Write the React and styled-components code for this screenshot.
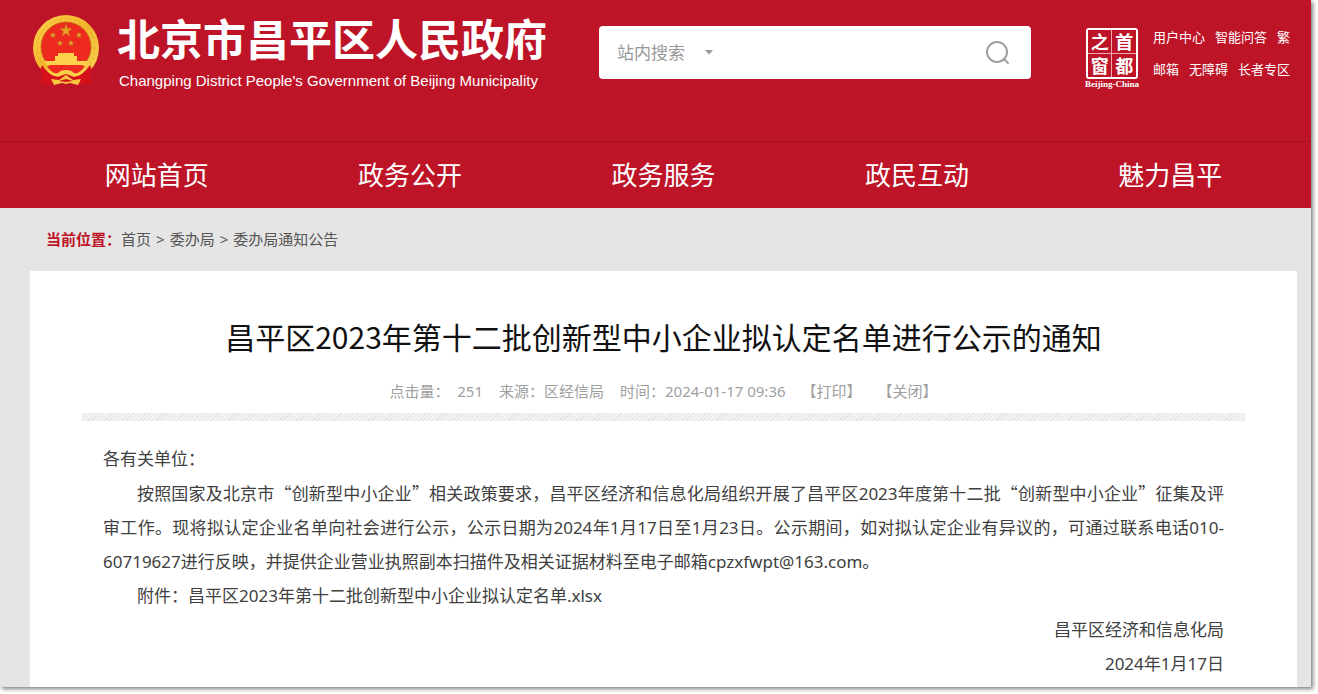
import { useState } from "react";
import styled, { createGlobalStyle } from "styled-components";

const GlobalStyle = createGlobalStyle`
  * {
    box-sizing: border-box;
  }

  body {
    margin: 0;
    background: #fff;
    color: #404040;
    font-family: "Noto Sans", "Noto Sans CJK SC", sans-serif;
  }

  a {
    color: inherit;
    text-decoration: none;
  }
`;

const Page = styled.div`
  display: flex;
  min-height: 100vh;
  padding: 0 7px 7px 0;
  overflow: hidden;
`;

const Site = styled.div`
  display: flex;
  flex-direction: column;
  flex: 1;
  min-width: 0;
  background: #e5e5e5;
  box-shadow: 2px 2px 4px rgba(0, 0, 0, 0.5);
`;

const Header = styled.header`
  display: flex;
  align-items: flex-start;
  height: 142px;
  padding: 12px 21px 0 30px;
  border-bottom: 1px solid #a51022;
  background: #be1428;
  color: #fff;
`;

const Brand = styled.a`
  display: flex;
  flex-shrink: 0;
  gap: 16px;
`;

const SiteName = styled.h1`
  margin: 0;
  font-family: "Noto Sans CJK SC", sans-serif;
  font-size: 43px;
  font-weight: 700;
  line-height: 50px;
`;

const SiteNameEn = styled.p`
  margin: 9px 0 0 2px;
  font-family: "Liberation Sans", Arial, sans-serif;
  font-size: 15px;
  line-height: 20px;
`;

const SearchForm = styled.form`
  display: flex;
  align-items: center;
  flex: 1;
  max-width: 432px;
  height: 53px;
  margin: 14px 50px 0 52px;
  padding: 0 20px 0 18px;
  border-radius: 4px;
  background: #fff;
  color: #999;
`;

const SearchScope = styled.label`
  display: flex;
  align-items: center;
  gap: 18px;
`;

const ScopeSelect = styled.select`
  width: 70px;
  padding: 0;
  border: none;
  outline: none;
  appearance: none;
  background: transparent;
  color: #999;
  font-family: inherit;
  font-size: 17px;
  line-height: 26px;
`;

const SearchInput = styled.input`
  flex: 1;
  min-width: 0;
  height: 40px;
  margin-left: 16px;
  border: none;
  outline: none;
  background: transparent;
  font-family: inherit;
  font-size: 17px;
`;

const SearchButton = styled.button`
  display: flex;
  padding: 0;
  border: none;
  background: transparent;
  color: #a0a0a0;
  cursor: pointer;
`;

const HeaderSide = styled.div`
  display: flex;
  gap: 14px;
  margin-left: auto;
`;

const Seal = styled.a`
  display: flex;
  flex-direction: column;
  align-items: center;
  padding-top: 16px;
`;

const SealFrame = styled.span`
  display: grid;
  grid-template-columns: 1fr 1fr;
  gap: 1px;
  width: 52px;
  height: 51px;
  border: 2px solid #fff;
  border-radius: 3px;
  background: #f0a8b0;
`;

const SealCell = styled.span`
  display: flex;
  align-items: center;
  justify-content: center;
  background: #be1428;
  font-family: "Noto Sans CJK SC", sans-serif;
  font-size: 18px;
  font-weight: 700;
  line-height: 23px;
`;

const SealCaption = styled.span`
  font-family: "Liberation Serif", serif;
  font-size: 9px;
  font-weight: 700;
  line-height: 10px;
`;

const QuickLinks = styled.nav`
  display: flex;
  flex-direction: column;
  gap: 12px;
  padding-top: 15px;
  font-size: 13px;
  line-height: 20px;
`;

const QuickRow = styled.div`
  display: flex;
  justify-content: space-between;
  gap: 10px;
  white-space: nowrap;
`;

const MainNav = styled.nav`
  display: grid;
  grid-template-columns: repeat(5, 1fr);
  padding: 0 14px 0 30px;
  background: #be1428;
`;

const NavLink = styled.a`
  color: #fff;
  font-size: 26px;
  line-height: 66px;
  text-align: center;
`;

const Breadcrumb = styled.nav`
  display: flex;
  padding: 19px 46px 20px;
  color: #555;
  font-size: 15px;
  line-height: 24px;
`;

const BreadcrumbLabel = styled.strong`
  color: #be1428;
`;

const Crumbs = styled.div`
  display: flex;
  gap: 5px;
`;

const Article = styled.article`
  flex: 1;
  margin: 0 14px 0 30px;
  padding: 41px 52px 0;
  background: #fff;
`;

const Title = styled.h2`
  margin: 0;
  color: #111;
  font-family: "Noto Sans CJK SC", sans-serif;
  font-size: 30px;
  font-weight: 400;
  line-height: 48px;
  text-align: center;
`;

const Meta = styled.div`
  display: flex;
  justify-content: center;
  gap: 16px;
  margin-top: 19px;
  color: #a0a0a0;
  font-size: 15px;
  line-height: 24px;
  white-space: pre;
`;

const MetaButton = styled.button`
  padding: 0;
  border: none;
  background: transparent;
  color: inherit;
  font: inherit;
  cursor: pointer;
`;

const Divider = styled.hr`
  height: 8px;
  margin: 10px 0 21px;
  border: none;
  background: repeating-linear-gradient(
    135deg,
    #e4e4e4 0 1px,
    #f4f4f4 1px 3px
  );
`;

const Content = styled.div`
  padding: 0 21px;
  font-size: 17px;
  line-height: 34px;
`;

const Paragraph = styled.p`
  margin: 0;
  text-align: justify;
  text-indent: ${({ $indent }) => ($indent ? "34px" : "0")};
`;

const Quote = styled.span`
  font-family: "Noto Sans CJK SC", sans-serif;
`;

const Signature = styled.p`
  margin: 0;
  text-align: right;
`;

const Emblem = () => (
  <svg width="71" height="76" viewBox="0 0 71 76" aria-hidden="true">
    <defs>
      <linearGradient id="gold" x1="0" y1="0" x2="1" y2="1">
        <stop offset="0" stopColor="#fbd34a" />
        <stop offset="0.5" stopColor="#f3b52c" />
        <stop offset="1" stopColor="#fbd95a" />
      </linearGradient>
    </defs>
    <circle cx="36" cy="36" r="33" fill="url(#gold)" />
    <circle
      cx="36"
      cy="36"
      r="29"
      fill="none"
      stroke="#e2a526"
      strokeWidth="1"
      strokeDasharray="2 3"
    />
    <circle cx="36" cy="35" r="25" fill="#ee2a1f" stroke="#c66a18" />
    <g fill="#e9a526" stroke="#b96b19" strokeWidth="0.4">
      <path d="M36 12l1.5 4.6h4.9l-4 2.9 1.6 4.7-4-2.9-4 2.9 1.6-4.7-4-2.9h4.9z" />
      <path
        id="smallStar"
        d="M23 20l.8 2.1h2.3l-1.8 1.5.7 2.2-2-1.3-2 1.3.7-2.2-1.8-1.5h2.3z"
      />
      <use href="#smallStar" x="26" />
      <use href="#smallStar" x="7" y="8" />
      <use href="#smallStar" x="18" y="8" />
    </g>
    <path
      d="M28 41h16v3h3v4H25v-4h3zM25 48h22v1h11l-3 4H17l-3-4h11z"
      fill="#fbd04a"
    />
    <path d="M17 54h38c-3 5-8 8-13 9l-6-3-6 3c-5-1-10-4-13-9z" fill="#ed2b20" />
    <path
      d="M12 53c4 6 9 10 16 12l8-3 8 3c7-2 12-6 16-12l2 6-3 4 3 7c-6 3-12 3-16 2l-10-2-10 2c-4 1-10 1-16-2l3-7-3-4z"
      fill="#d5101b"
    />
    <path
      d="M16 56c4 4 8 6 12 5 2-2 4-3 8-3s6 1 8 3c4 1 8-1 12-5-2 6-8 9-13 8l-7-3-7 3c-5 1-11-2-13-8z"
      fill="#fbcf48"
    />
    <path
      d="M21 67l8 1 7-5 7 5 8-1-3 6-8-2-4 1-4-1-8 2z"
      fill="#f8c63f"
    />
    <path d="M29 69l7-2 7 2-7 1z" fill="#d5101b" />
  </svg>
);

const SearchIcon = () => (
  <svg
    width="26"
    height="26"
    viewBox="0 0 26 26"
    fill="none"
    stroke="currentColor"
    strokeWidth="2"
    strokeLinecap="round"
    aria-hidden="true"
  >
    <circle cx="12" cy="12" r="10" />
    <path d="M19 19l4 4" />
  </svg>
);

const Caret = () => (
  <svg width="8" height="5" viewBox="0 0 8 5" aria-hidden="true">
    <path d="M0 0h8L4 4.5z" fill="#999" />
  </svg>
);

const quickLinks = [
  ["用户中心", "智能问答", "繁"],
  ["邮箱", "无障碍", "长者专区"],
];

const navItems = ["网站首页", "政务公开", "政务服务", "政民互动", "魅力昌平"];

const crumbs = ["首页", "委办局", "委办局通知公告"];

const SiteHeader = () => {
  const [keyword, setKeyword] = useState("");

  return (
    <Header>
      <Brand href="#">
        <Emblem />
        <div>
          <SiteName>北京市昌平区人民政府</SiteName>
          <SiteNameEn>
            Changping District People's Government of Beijing Municipality
          </SiteNameEn>
        </div>
      </Brand>
      <SearchForm onSubmit={(e) => e.preventDefault()}>
        <SearchScope>
          <ScopeSelect aria-label="搜索范围">
            <option>站内搜索</option>
          </ScopeSelect>
          <Caret />
        </SearchScope>
        <SearchInput
          type="text"
          aria-label="搜索"
          value={keyword}
          onChange={(e) => setKeyword(e.target.value)}
        />
        <SearchButton type="submit" aria-label="搜索">
          <SearchIcon />
        </SearchButton>
      </SearchForm>
      <HeaderSide>
        <Seal href="#">
          <SealFrame>
            {["之", "首", "窗", "都"].map((char) => (
              <SealCell key={char}>{char}</SealCell>
            ))}
          </SealFrame>
          <SealCaption>Beijing-China</SealCaption>
        </Seal>
        <QuickLinks>
          {quickLinks.map((row) => (
            <QuickRow key={row[0]}>
              {row.map((label) => (
                <a key={label} href="#">
                  {label}
                </a>
              ))}
            </QuickRow>
          ))}
        </QuickLinks>
      </HeaderSide>
    </Header>
  );
};

const App = () => (
  <>
    <GlobalStyle />
    <Page>
      <Site>
        <SiteHeader />
        <MainNav>
          {navItems.map((item) => (
            <NavLink key={item} href="#">
              {item}
            </NavLink>
          ))}
        </MainNav>
        <Breadcrumb>
          <BreadcrumbLabel>当前位置：</BreadcrumbLabel>
          <Crumbs>
            {crumbs.map((crumb, i) => [
              i > 0 && <span key={`${crumb}-sep`}>&gt;</span>,
              <a key={crumb} href="#">
                {crumb}
              </a>,
            ])}
          </Crumbs>
        </Breadcrumb>
        <Article>
          <Title>昌平区2023年第十二批创新型中小企业拟认定名单进行公示的通知</Title>
          <Meta>
            <span>点击量：{"  "}251</span>
            <span>来源：区经信局</span>
            <span>时间：2024-01-17 09:36</span>
            <MetaButton type="button">【打印】</MetaButton>
            <MetaButton type="button">【关闭】</MetaButton>
          </Meta>
          <Divider />
          <Content>
            <Paragraph>各有关单位：</Paragraph>
            <Paragraph $indent>
              按照国家及北京市<Quote>“</Quote>创新型中小企业<Quote>”</Quote>
              相关政策要求，昌平区经济和信息化局组织开展了昌平区2023年度第十二批
              <Quote>“</Quote>创新型中小企业<Quote>”</Quote>
              征集及评审工作。现将拟认定企业名单向社会进行公示，公示日期为2024年1月17日至1月23日。公示期间，如对拟认定企业有异议的，可通过联系电话010-60719627进行反映，并提供企业营业执照副本扫描件及相关证据材料至电子邮箱cpzxfwpt@163.com。
            </Paragraph>
            <Paragraph $indent>
              附件：
              <a href="#">
                昌平区2023年第十二批创新型中小企业拟认定名单.xlsx
              </a>
            </Paragraph>
            <Signature>昌平区经济和信息化局</Signature>
            <Signature>2024年1月17日</Signature>
          </Content>
        </Article>
      </Site>
    </Page>
  </>
);

export default App;
